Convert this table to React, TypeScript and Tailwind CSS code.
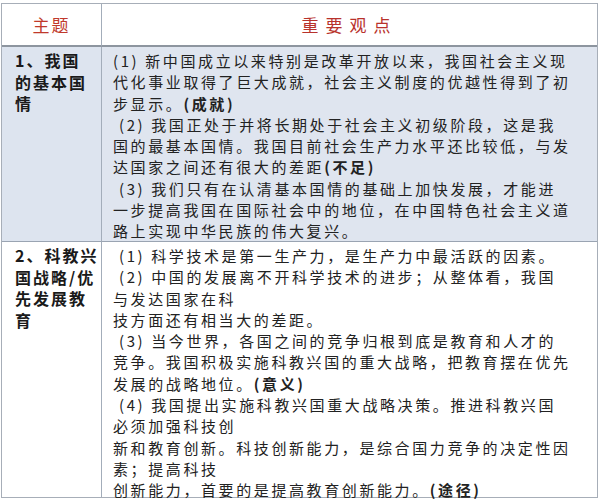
const FONT = { fontFamily: '"Noto Sans CJK SC", "Noto Sans", sans-serif' };

type Seg = { t: string; b?: boolean };
type Line = Seg[];

const row1: Line[] = [
  [{ t: "(1) 新中国成立以来特别是改革开放以来，我国社会主义现" }],
  [{ t: "代化事业取得了巨大成就，社会主义制度的优越性得到了初" }],
  [{ t: "步显示。" }, { t: "(成就)", b: true }],
  [{ t: " (2) 我国正处于并将长期处于社会主义初级阶段，这是我" }],
  [{ t: "国的最基本国情。我国目前社会生产力水平还比较低，与发" }],
  [{ t: "达国家之间还有很大的差距" }, { t: "(不足)", b: true }],
  [{ t: " (3) 我们只有在认清基本国情的基础上加快发展，才能进" }],
  [{ t: "一步提高我国在国际社会中的地位，在中国特色社会主义道" }],
  [{ t: "路上实现中华民族的伟大复兴。" }],
];

const row2: Line[] = [
  [{ t: " (1) 科学技术是第一生产力，是生产力中最活跃的因素。" }],
  [{ t: " (2) 中国的发展离不开科学技术的进步；从整体看，我国" }],
  [{ t: "与发达国家在科" }],
  [{ t: "技方面还有相当大的差距。" }],
  [{ t: " (3) 当今世界，各国之间的竞争归根到底是教育和人才的" }],
  [{ t: "竞争。我国积极实施科教兴国的重大战略，把教育摆在优先" }],
  [{ t: "发展的战略地位。" }, { t: "(意义)", b: true }],
  [{ t: " (4) 我国提出实施科教兴国重大战略决策。推进科教兴国" }],
  [{ t: "必须加强科技创" }],
  [{ t: "新和教育创新。科技创新能力，是综合国力竞争的决定性因" }],
  [{ t: "素；提高科技" }],
  [{ t: "创新能力，首要的是提高教育创新能力。" }, { t: "(途径)", b: true }],
];

function Lines({ lines }: { lines: Line[] }) {
  return (
    <div className="pl-[11px] pt-[3px] text-[15px] leading-[21.3px] tracking-[2.6px] text-[#222]">
      {lines.map((line, i) => (
        <div key={i} className="whitespace-pre">
          {line.map((s, j) => (
            <span key={j} className={s.b ? "font-bold" : ""}>
              {s.t}
            </span>
          ))}
        </div>
      ))}
    </div>
  );
}

function Topic({ lines }: { lines: string[] }) {
  return (
    <div className="pl-[13px] pt-[3px] text-[16px] font-bold leading-[21.5px] tracking-[2px] text-[#1a1a1a]">
      {lines.map((l) => (
        <div key={l} className="whitespace-pre">
          {l}
        </div>
      ))}
    </div>
  );
}

export default function App() {
  return (
    <div className="w-[599px] h-[504px] bg-white pt-[3px] pl-[1px]" style={FONT}>
      <div className="w-[597px] border border-[#a7aeb8] grid grid-cols-[100px_1fr]">
        <div className="h-[43px] flex items-center justify-center border-r border-[#a3adba] border-b-2 border-b-[#8d959f] text-[17px] tracking-[2px] text-[#c0392b]">
          主题
        </div>
        <div className="h-[43px] flex items-center justify-center border-b-2 border-b-[#8d959f] text-[17px] tracking-[7px] text-[#b8322c]">
          重要观点
        </div>

        <div className="h-[195px] bg-[#dde4ef] border-r border-[#a3adba] border-b border-b-[#9aa4b2]">
          <Topic lines={["1、我国", "的基本国", "情"]} />
        </div>
        <div className="h-[195px] bg-[#dfe5ef] border-b border-b-[#9aa4b2]">
          <Lines lines={row1} />
        </div>

        <div className="h-[255px] border-r border-[#a3adba]">
          <Topic lines={["2、科教兴", "国战略/优", "先发展教", "育"]} />
        </div>
        <div className="h-[255px]">
          <Lines lines={row2} />
        </div>
      </div>
    </div>
  );
}
